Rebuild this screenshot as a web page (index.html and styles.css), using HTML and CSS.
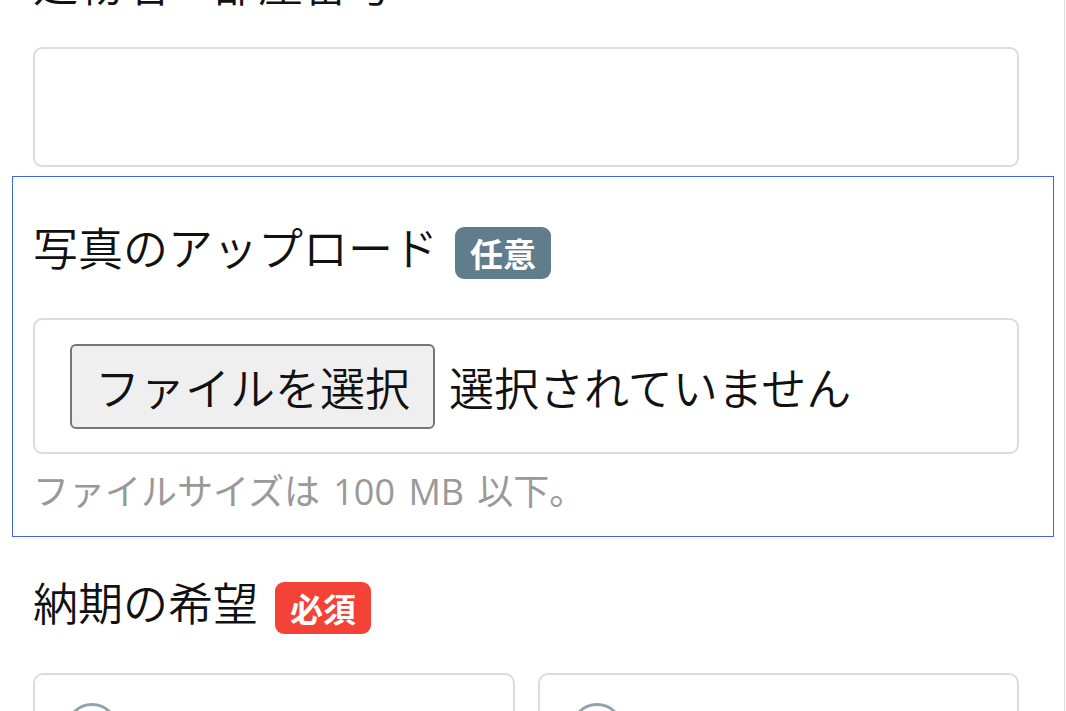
FILE: index.html
```html
<!DOCTYPE html>
<html lang="ja">
<head>
    <meta charset="UTF-8">
    <meta name="viewport" content="width=device-width, initial-scale=1.0">
    <title>お申し込みフォーム</title>
    <link rel="stylesheet" href="styles.css">
</head>
<body>
    <div class="page">
        <div class="field field-top">
            <div class="field-label">建物名・部屋番号</div>
            <input class="text-input" type="text">
        </div>

        <div class="field field-active">
            <div class="field-label">
                <span>写真のアップロード</span>
                <span class="badge badge-optional">任意</span>
            </div>
            <div class="file-box">
                <button class="file-button" type="button">ファイルを選択</button>
                <span class="file-name">選択されていません</span>
            </div>
            <p class="help">ファイルサイズは 100 MB 以下。</p>
        </div>

        <div class="field">
            <div class="field-label">
                <span>納期の希望</span>
                <span class="badge badge-required">必須</span>
            </div>
            <div class="choices">
                <label class="choice"><span class="radio"></span></label>
                <label class="choice"><span class="radio"></span></label>
            </div>
        </div>
    </div>
</body>
</html>
```

FILE: styles.css
```css
body {
    margin: 0;
    background-color: #fff;
    font-family: "Noto Sans CJK JP", "Noto Sans", sans-serif;
    font-weight: 350;
    color: #111;
}

.page {
    width: 1065px;
    height: 711px;
    overflow: hidden;
    box-sizing: border-box;
    padding: 0 10px 0 12px;
    border-right: 1px solid #dcdcdc;
}

.field {
    border: 1px solid transparent;
    padding: 0 34px 0 20px;
}

.field-top {
    margin-top: -45px;
}

.field-active {
    border-color: #4263eb;
    padding-top: 43px;
    padding-bottom: 19px;
}

.field-label {
    display: flex;
    align-items: flex-start;
    gap: 17px;
    font-size: 45px;
    line-height: 54px;
    margin-bottom: 39px;
}

.field-top .field-label {
    margin-bottom: 37px;
}

.badge {
    margin-top: 7px;
    padding: 0 15px;
    height: 52px;
    line-height: 52px;
    border-radius: 9px;
    font-size: 33px;
    font-weight: 700;
    color: #fff;
}

.badge-optional {
    background-color: #607d8b;
}

.badge-required {
    background-color: #f44336;
}

.text-input {
    display: block;
    width: 100%;
    height: 120px;
    box-sizing: border-box;
    border: 2px solid #dcdcdc;
    border-radius: 9px;
    margin: 0 0 8px;
}

.file-box {
    display: flex;
    align-items: center;
    gap: 14px;
    height: 136px;
    box-sizing: border-box;
    padding: 0 35px;
    border: 2px solid #dcdcdc;
    border-radius: 9px;
}

.file-button {
    height: 85px;
    padding: 0 23px;
    background-color: #efefef;
    border: 2px solid #767676;
    border-radius: 6px;
    font-family: inherit;
    font-weight: inherit;
    font-size: 45px;
    color: #111;
}

.file-name {
    font-size: 45px;
}

.help {
    margin: 12px 0 0;
    font-family: "Open Sans", "Noto Sans CJK JP", sans-serif;
    font-weight: 400;
    font-size: 36px;
    line-height: 51px;
    word-spacing: 4px;
    color: #999;
}

.field-active + .field {
    padding-top: 37px;
}

.choices {
    display: flex;
    gap: 23px;
}

.choice {
    flex: 1;
    height: 120px;
    box-sizing: border-box;
    border: 2px solid #dcdcdc;
    border-radius: 10px;
    padding: 28px 30px;
}

.radio {
    display: block;
    width: 54px;
    height: 54px;
    box-sizing: border-box;
    border: 3px solid #90a4ae;
    border-radius: 50%;
}
```
